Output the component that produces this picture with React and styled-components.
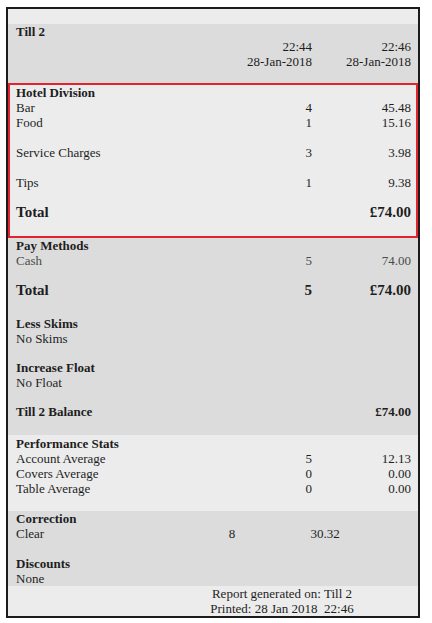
import React from 'react'
import styled, { createGlobalStyle } from 'styled-components'

const GlobalStyle = createGlobalStyle`
  body {
    margin: 0;
    background: #ffffff;
    font-family: "Liberation Serif", "Times New Roman", serif;
  }
`

const Sheet = styled.div`
  margin: 7px 0 0 6px;
  width: 410px;
  border: 2px solid #1b1b1b;
  font-size: 13px;
  line-height: 15px;
  color: #1e1e1e;
`

const Section = styled.section`
  background: ${p => (p.$tone === 'dark' ? '#dcdcdc' : '#ececec')};
  padding: ${p => p.$pad || 0}px 7px 0 8px;
`

const Highlight = styled.section`
  background: #ececec;
  border: 2px solid #e2242f;
  padding: 0 5px 0 6px;
`

const Row = styled.div`
  display: grid;
  grid-template-columns: 1fr 100px 99px;
  color: ${p => p.$muted ? '#4a4a4a' : 'inherit'};
  font-weight: ${p => (p.$bold ? 700 : 400)};
  font-size: ${p => (p.$big ? '15px' : 'inherit')};
  line-height: ${p => (p.$big ? '17px' : 'inherit')};
`

const Cell = styled.div`
  text-align: ${p => p.$align || 'left'};
  white-space: nowrap;
`

const Heading = styled.div`
  font-weight: 700;
`

const Spacer = styled.div`
  height: ${p => p.$h}px;
`

const CorrectionRow = styled.div`
  display: grid;
  grid-template-columns: 184px 64px 122px 1fr;
`

const CenterCell = styled.div`
  text-align: center;
`

const Footer = styled.div`
  display: grid;
  grid-template-columns: 1fr 258px;
  white-space: pre;
`

const Line = ({ label, count, value, ...rest }) => (
  <Row {...rest}>
    <Cell>{label}</Cell>
    <Cell $align='right'>{count}</Cell>
    <Cell $align='right'>{value}</Cell>
  </Row>
)

export default function App () {
  return (
    <>
      <GlobalStyle />
      <Sheet>
        <Section $tone='light'>
          <Spacer $h={15} />
        </Section>
        <Section $tone='dark'>
          <Line label={<Heading>Till 2</Heading>} />
          <Line count='22:44' value='22:46' />
          <Line count='28-Jan-2018' value='28-Jan-2018' />
          <Spacer $h={14} />
        </Section>
        <Highlight>
          <Heading>Hotel Division</Heading>
          <Line label='Bar' count='4' value='45.48' />
          <Line label='Food' count='1' value='15.16' />
          <Spacer $h={15} />
          <Line label='Service Charges' count='3' value='3.98' />
          <Spacer $h={15} />
          <Line label='Tips' count='1' value='9.38' />
          <Spacer $h={14} />
          <Line label='Total' value='£74.00' $bold $big />
          <Spacer $h={15} />
        </Highlight>
        <Section $tone='dark'>
          <Heading>Pay Methods</Heading>
          <Line label='Cash' count='5' value='74.00' $muted />
          <Spacer $h={14} />
          <Line label='Total' count='5' value='£74.00' $bold $big />
          <Spacer $h={17} />
          <Heading>Less Skims</Heading>
          <div>No Skims</div>
          <Spacer $h={14} />
          <Heading>Increase Float</Heading>
          <div>No Float</div>
          <Spacer $h={14} />
          <Line label='Till 2 Balance' value='£74.00' $bold />
          <Spacer $h={16} />
        </Section>
        <Section $tone='light' $pad={1}>
          <Heading>Performance Stats</Heading>
          <Line label='Account Average' count='5' value='12.13' />
          <Line label='Covers Average' count='0' value='0.00' />
          <Line label='Table Average' count='0' value='0.00' />
          <Spacer $h={15} />
        </Section>
        <Section $tone='dark'>
          <Heading>Correction</Heading>
          <CorrectionRow>
            <div>Clear</div>
            <CenterCell>8</CenterCell>
            <CenterCell>30.32</CenterCell>
          </CorrectionRow>
          <Spacer $h={15} />
          <Heading>Discounts</Heading>
          <div>None</div>
        </Section>
        <Section $tone='light'>
          <Footer>
            <div />
            <CenterCell>Report generated on: Till 2</CenterCell>
          </Footer>
          <Footer>
            <div />
            <CenterCell>Printed: 28 Jan 2018  22:46</CenterCell>
          </Footer>
        </Section>
      </Sheet>
    </>
  )
}
